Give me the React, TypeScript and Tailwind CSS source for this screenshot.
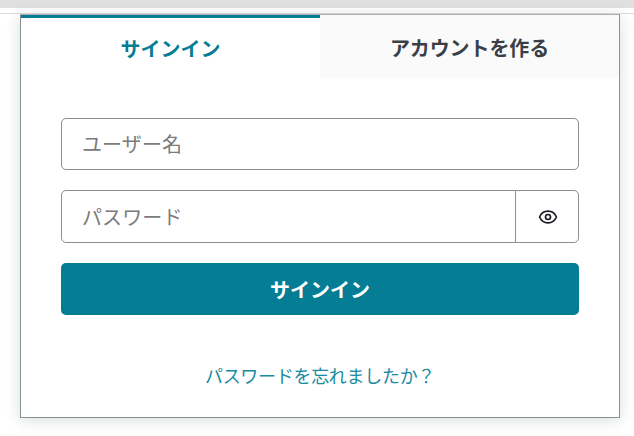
import { Eye } from "lucide-react";

const font = "font-['Noto_Sans_CJK_JP','Noto_Sans',sans-serif]";

export default function App() {
  return (
    <div className={`w-[634px] h-[436px] overflow-hidden bg-white ${font}`}>
      <div className="h-2 bg-[#e0e0e0]" />
      <div className="h-[6px] border-b border-[#dddddd]" />
      <div className="mx-5 w-[600px] h-[404px] border border-[#879196] border-t-[#aab0b4] bg-white shadow-[0_2px_14px_rgba(0,28,36,0.15)]">
        <div className="flex h-[63px]">
          <div className="w-[299px] border-t-[3px] border-[#047d95] flex items-center justify-center pt-[1px] text-[20px] font-bold text-[#047d95]">
            サインイン
          </div>
          <div className="flex-1 bg-[#fafafa] flex items-center justify-center pt-[3px] text-[20px] font-bold text-[#3a3f47] tracking-[-0.1px]">
            アカウントを作る
          </div>
        </div>
        <div className="flex flex-col px-10 pt-10">
          <input
            placeholder="ユーザー名"
            className="h-[52px] w-full rounded-[5px] border border-[#879196] px-5 pb-[2px] text-[20px] font-normal tracking-[0.1px] text-[#16191f] placeholder:text-[#7b7b7b] outline-none"
          />
          <div className="mt-5 flex h-[53px]">
            <input
              placeholder="パスワード"
              className="min-w-0 flex-1 rounded-l-[5px] border border-[#879196] px-5 text-[20px] font-normal tracking-[0.1px] text-[#16191f] placeholder:text-[#7b7b7b] outline-none"
            />
            <button className="-ml-px flex w-[64px] items-center justify-center rounded-r-[5px] border border-[#879196] bg-white pl-[2px] text-[#16191f]">
              <Eye size={20} strokeWidth={2} />
            </button>
          </div>
          <button className="mt-5 h-[52px] rounded-[5px] bg-[#047d95] pt-[1px] text-[20px] font-bold text-white">
            サインイン
          </button>
          <a className="mt-[45px] text-center text-[18px] leading-[30px] font-normal tracking-[-0.3px] text-[#1a8aa0]">
            パスワードを忘れましたか？
          </a>
        </div>
      </div>
    </div>
  );
}
